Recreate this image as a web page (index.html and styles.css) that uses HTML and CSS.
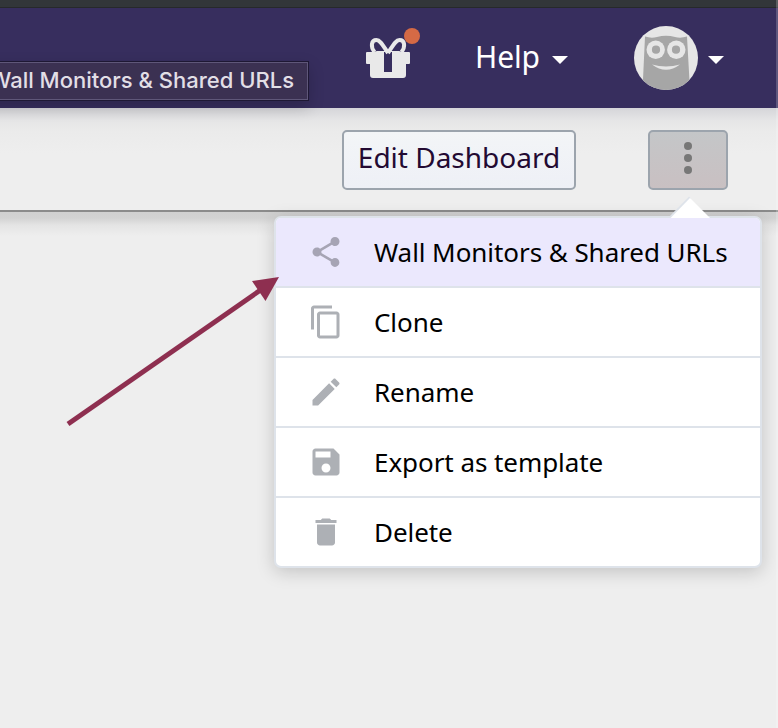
FILE: index.html
```html
<!DOCTYPE html>
<html lang="en">
<head>
<meta charset="utf-8">
<title>Dashboard</title>
<link rel="stylesheet" href="styles.css">
</head>
<body>
<div class="chrome"></div>
<header class="header">
  <div class="gift">
    <svg width="44" height="42" viewBox="0 0 44 42">
      <g fill="none" stroke="#e9e9e9" stroke-width="4">
        <path d="M22 16C17.500 9.500 14.500 3 10.500 3C5 3 4.500 10 8.500 15"/>
        <path d="M22 16C26.500 9.500 29.500 3 33.500 3C39 3 39.500 10 35.500 15"/>
      </g>
      <path fill="#e9e9e9" fill-rule="evenodd" d="M1 15H7L11 14H33L37 15H43a1 1 0 0 1 1 1V26a1 1 0 0 1-1 1H40V38a3 3 0 0 1-3 3H7a3 3 0 0 1-3-3V27H1a1 1 0 0 1-1-1V16a1 1 0 0 1 1-1ZM18 15V35H26V15Z"/>
    </svg>
    <span class="badge"></span>
  </div>
  <div class="help"><span class="help-label">Help</span><span class="caret"></span></div>
  <div class="account">
    <svg width="64" height="64" viewBox="0 0 64 64">
      <defs><clipPath id="face"><circle cx="32" cy="32" r="32"/></clipPath></defs>
      <g clip-path="url(#face)">
        <path fill="#e6e6e6" d="M0 0H64V64H0Z"/>
        <path fill="#a6a6a6" d="M11 10.500Q17 12.500 23 11Q32 8.500 41 11Q47 12.500 53 10.500L56 64H8.500Z"/>
        <circle cx="21.700" cy="23.700" r="9.200" fill="#e6e6e6"/>
        <circle cx="42.300" cy="23.700" r="9.200" fill="#e6e6e6"/>
        <circle cx="22" cy="23.700" r="4.100" fill="#a6a6a6"/>
        <circle cx="42" cy="23.700" r="4.100" fill="#a6a6a6"/>
        <path fill="#e6e6e6" d="M18 38.500Q32 42.500 46 38.500Q32 49 18 38.500Z"/>
      </g>
    </svg>
    <span class="caret"></span>
  </div>
  <div class="tooltip">Wall Monitors &amp; Shared URLs</div>
</header>
<div class="toolbar">
  <button class="btn edit">Edit Dashboard</button>
  <div class="more">
    <button class="btn kebab" aria-label="More"><i></i><i></i><i></i></button>
    <div class="menu">
      <svg class="tip" width="44" height="22" viewBox="0 0 44 22"><path fill="#dee3ea" d="M0 22L21 0.500L23 2.500L4 22Z"/><path fill="#fff" d="M2.500 22L22 2L42 22Z"/></svg>
      <div class="item active"><svg viewBox="0 0 24 24"><path d="M18 16.080c-.76 0-1.440.3-1.960.77L8.910 12.700c.05-.23.09-.46.09-.7s-.04-.47-.09-.7l7.050-4.110c.54.5 1.250.81 2.040.81 1.660 0 3-1.340 3-3s-1.340-3-3-3-3 1.340-3 3c0 .24.04.47.09.7L8.040 9.810C7.500 9.310 6.790 9 6 9c-1.660 0-3 1.340-3 3s1.340 3 3 3c.79 0 1.500-.31 2.040-.81l7.120 4.160c-.05.21-.08.43-.08.65 0 1.610 1.310 2.920 2.920 2.920s2.920-1.310 2.920-2.920-1.310-2.920-2.920-2.920z"/></svg>Wall Monitors &amp; Shared URLs</div>
      <div class="item"><svg viewBox="0 0 24 24"><path d="M16 1H4c-1.100 0-2 .9-2 2v14h2V3h12V1zm3 4H8c-1.100 0-2 .9-2 2v14c0 1.100.9 2 2 2h11c1.100 0 2-.9 2-2V7c0-1.100-.9-2-2-2zm0 16H8V7h11v14z"/></svg>Clone</div>
      <div class="item"><svg viewBox="0 0 24 24"><path d="M3 17.250V21h3.750L17.810 9.940l-3.750-3.750L3 17.250zM20.710 7.040c.39-.39.39-1.020 0-1.410l-2.340-2.340c-.39-.39-1.020-.39-1.410 0l-1.830 1.830 3.750 3.750 1.830-1.830z"/></svg>Rename</div>
      <div class="item"><svg viewBox="0 0 24 24"><path d="M17 3H5c-1.110 0-2 .9-2 2v14c0 1.100.89 2 2 2h14c1.100 0 2-.9 2-2V7l-4-4zm-5 16c-1.660 0-3-1.340-3-3s1.340-3 3-3 3 1.340 3 3-1.340 3-3 3zm3-10H5V5h10v4z"/></svg>Export as template</div>
      <div class="item"><svg viewBox="0 0 24 24"><path d="M6 19c0 1.100.9 2 2 2h8c1.100 0 2-.9 2-2V7H6v12zM19 4h-3.500l-1-1h-5l-1 1H5v2h14V4z"/></svg>Delete</div>
    </div>
  </div>
</div>
<main class="content"></main>
<div class="edge"></div>
<svg class="arrow" width="214" height="152" viewBox="0 0 214 152"><path d="M2 149L196 14" stroke="#8e2f50" stroke-width="5"/><path fill="#8e2f50" d="M213 2L186 6L199.500 26Z"/></svg>
</body>
</html>
```
FILE: styles.css
```css
* { box-sizing: border-box; }
body {
  margin: 0;
  width: 778px;
  height: 728px;
  overflow: hidden;
  position: relative;
  display: flex;
  flex-direction: column;
  background: #eee;
  font-family: "Noto Sans", "Open Sans", sans-serif;
}
.chrome { height: 8px; background: #323639; border-bottom: 1px solid #26292b; }
.header {
  position: relative;
  z-index: 2;
  height: 100px;
  display: flex;
  justify-content: flex-end;
  align-items: center;
  padding-right: 54px;
  background: #372e5e;
  color: #fff;
}
.gift { position: relative; width: 44px; height: 42px; margin-right: 65px; }
.gift svg { display: block; }
.badge {
  position: absolute;
  left: 38px;
  top: -9px;
  width: 16px;
  height: 16px;
  border-radius: 50%;
  background: #d56a45;
}
.help {
  display: flex;
  align-items: center;
  justify-content: space-between;
  width: 93px;
  margin-right: 66px;
  font-size: 30px;
  line-height: 40px;
}
.help-label { padding-bottom: 2px; letter-spacing: -.1px; }
.caret {
  border: 8px solid transparent;
  border-top-color: #fff;
  border-bottom: 0;
  margin-top: 4px;
}
.account { display: flex; align-items: center; gap: 10px; }
.account svg { display: block; }
.tooltip {
  position: absolute;
  right: 469px;
  top: 53px;
  height: 40px;
  padding: 0 14px;
  border: 1px solid #1e1834;
  box-shadow: inset 0 0 0 1px #5f5779, 0 6px 16px rgba(0, 0, 0, .2);
  background: #3b3152;
  color: #e2dfe6;
  font: 500 22px/36px Inter, sans-serif;
  white-space: nowrap;
}
.toolbar {
  height: 104px;
  display: flex;
  justify-content: flex-end;
  align-items: flex-start;
  gap: 72px;
  padding: 22px 50px 0 0;
  border-bottom: 2px solid #8b8b8b;
  background: linear-gradient(#d5d5d9, #e5e5e6 12px, #ebebeb 24px, #eee 45px);
}
.btn {
  display: flex;
  height: 60px;
  padding: 0;
  margin: 0;
  border: 2px solid #9ca4ad;
  border-radius: 5px;
  justify-content: center;
  align-items: center;
}
.edit {
  width: 234px;
  padding-bottom: 6px;
  background: linear-gradient(#f3f5f7, #eef0f6);
  color: #230a32;
  font: 28px/40px "Noto Sans", sans-serif;
  white-space: nowrap;
}
.more { position: relative; }
.kebab {
  width: 80px;
  flex-direction: column;
  gap: 4px;
  padding-bottom: 4px;
  background: linear-gradient(#c4c6c8, #c9c0c2);
}
.kebab i { width: 8px; height: 8px; border-radius: 50%; background: #777; }
.menu {
  position: absolute;
  z-index: 3;
  top: 86px;
  right: -34px;
  width: 488px;
  border: 2px solid #dee3ea;
  border-radius: 7px;
  background: #fff;
  box-shadow: 0 4px 18px rgba(0, 0, 0, .18);
}
.tip { position: absolute; right: 48px; top: -22px; }
.item {
  display: flex;
  align-items: center;
  height: 70px;
  padding-left: 32px;
  gap: 30px;
  border-bottom: 2px solid #dee3ea;
  color: #000;
  font-size: 26px;
  letter-spacing: -.06px;
  line-height: 36px;
  white-space: nowrap;
}
.item svg { width: 36px; height: 36px; fill: #adb0b5; flex: none; }
.item.active { background: #ebe8fd; border-radius: 5px 5px 0 0; }
.item.active svg { fill: #a6a4b4; }
.item:last-child { height: 68px; border-bottom: 0; }
.content { flex: 1; background: linear-gradient(#d0d0d0, #d2d2d2 6px, #e4e4e4 13px, #eee 24px); }
.edge {
  position: absolute;
  z-index: 5;
  top: 0;
  right: 0;
  width: 2px;
  height: 728px;
  background: rgba(255, 255, 255, .2);
}
.arrow { position: absolute; z-index: 4; left: 66px; top: 275px; }
```
